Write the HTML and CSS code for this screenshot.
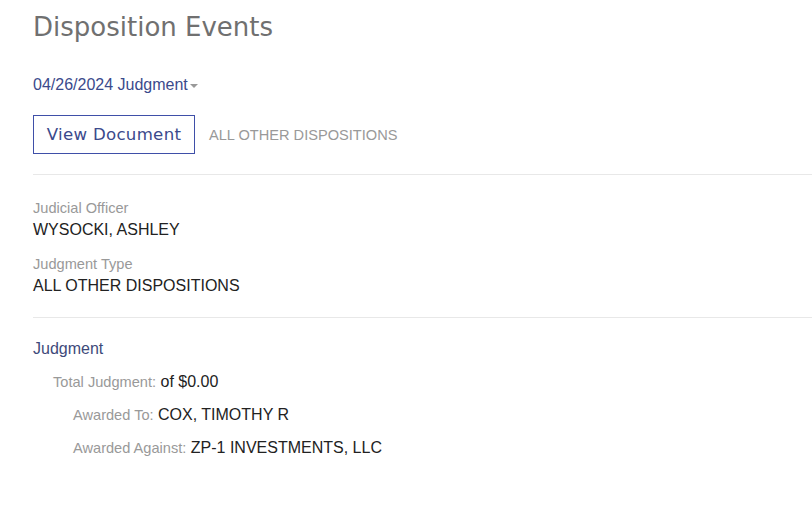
FILE: index.html
```html
<!DOCTYPE html>
<html>
<head>
<meta charset="utf-8">
<link rel="stylesheet" href="styles.css">
</head>
<body>
<div class="page">
  <h1 class="title">Disposition Events</h1>
  <div class="event-select">
    <span class="event-name">04/26/2024 Judgment</span><span class="caret"></span>
  </div>
  <div class="actions">
    <button class="btn-doc">View Document</button>
    <span class="disp-type">ALL OTHER DISPOSITIONS</span>
  </div>
  <hr class="divider">
  <div class="fields">
    <div class="field">
      <div class="label">Judicial Officer</div>
      <div class="value">WYSOCKI, ASHLEY</div>
    </div>
    <div class="field">
      <div class="label">Judgment Type</div>
      <div class="value">ALL OTHER DISPOSITIONS</div>
    </div>
  </div>
  <hr class="divider second">
  <div class="judgment">
    <div class="judgment-title">Judgment</div>
    <div class="jrow lvl1"><span class="label-inline">Total Judgment:</span> <span class="value-inline">of $0.00</span></div>
    <div class="jrow lvl2"><span class="label-inline">Awarded To:</span> <span class="value-inline">COX, TIMOTHY R</span></div>
    <div class="jrow lvl2"><span class="label-inline">Awarded Against:</span> <span class="value-inline">ZP-1 INVESTMENTS, LLC</span></div>
  </div>
</div>
</body>
</html>
```

FILE: styles.css
```css
html, body {
  margin: 0;
  padding: 0;
  background: #fff;
}
body {
  font-family: "Liberation Sans", Arial, sans-serif;
  color: #222;
}
.page {
  padding: 10px 0 0 33px;
}
.title {
  margin: 0;
  font-family: "DejaVu Sans", Verdana, sans-serif;
  font-weight: normal;
  font-size: 26px;
  line-height: 34px;
  color: #707070;
}
.event-select {
  margin-top: 32px;
  display: flex;
  align-items: center;
  height: 18px;
}
.event-name {
  font-size: 16px;
  line-height: 18px;
  color: #3b4a8c;
}
.caret {
  width: 0;
  height: 0;
  border-left: 4px solid transparent;
  border-right: 4px solid transparent;
  border-top: 4px solid #999;
  margin-left: 2px;
  margin-top: 2px;
}
.actions {
  margin-top: 21px;
  display: flex;
  align-items: center;
  gap: 14px;
}
.btn-doc {
  box-sizing: border-box;
  height: 39px;
  width: 162px;
  border: 1px solid #3f4fa8;
  background: #fff;
  color: #3b4a8c;
  font-family: "DejaVu Sans", Verdana, sans-serif;
  font-size: 16.6px;
  padding: 0;
  letter-spacing: 0.3px;
}
.disp-type {
  font-size: 14.6px;
  color: #999;
}
.divider {
  margin: 20px 0 0 0;
  border: 0;
  border-top: 1px solid #e8e8e8;
  height: 0;
}
.fields {
  padding-top: 23px;
}
.label {
  font-size: 14.6px;
  line-height: 20px;
  color: #999;
}
.value {
  font-size: 16px;
  line-height: 24px;
  color: #222;
  margin-bottom: 12px;
}
.field:last-child .value {
  margin-bottom: 0;
}
.divider.second {
  margin-top: 19px;
}
.judgment {
  padding-top: 21px;
}
.judgment-title {
  font-size: 16px;
  line-height: 20px;
  color: #3e4a7a;
  margin-bottom: 13px;
}
.jrow {
  line-height: 20px;
  margin-bottom: 13px;
}
.lvl1 { padding-left: 20px; }
.lvl2 { padding-left: 40px; }
.label-inline {
  font-size: 14.6px;
  color: #999;
}
.value-inline {
  font-size: 16px;
  color: #222;
}
```
